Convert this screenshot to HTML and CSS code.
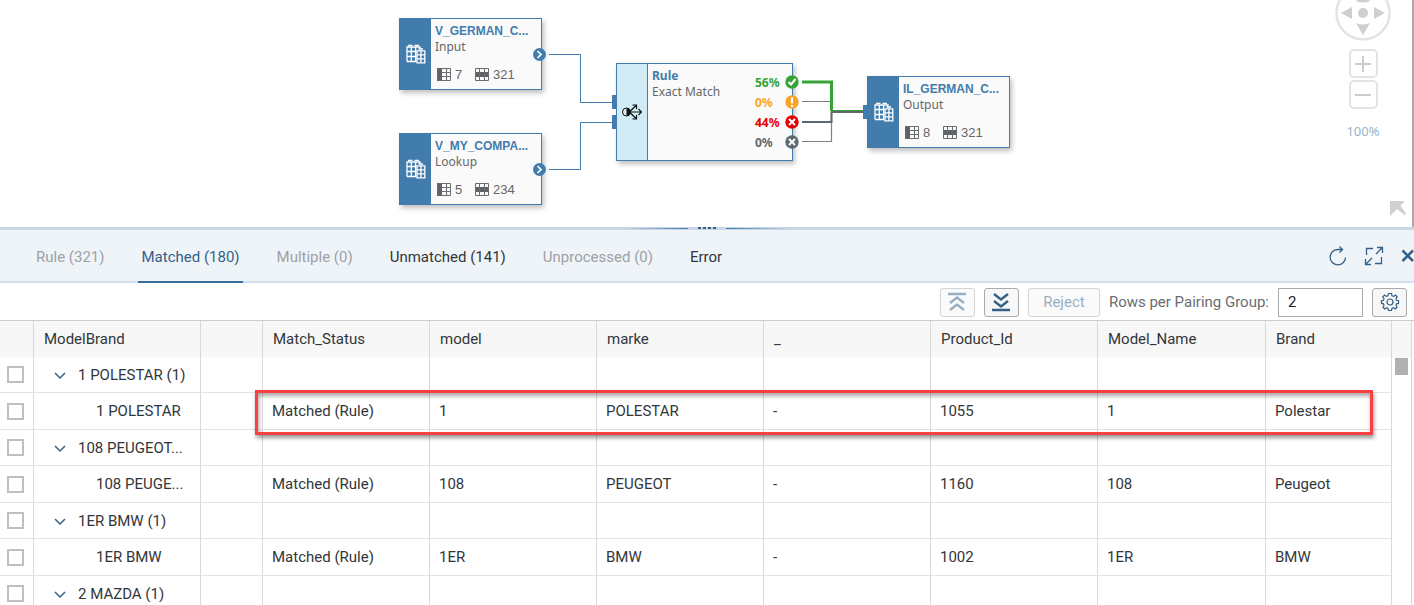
FILE: index.html
```html
<!DOCTYPE html>
<html lang="en">
<head>
<meta charset="utf-8">
<title>Match results</title>
<link rel="stylesheet" href="styles.css">
</head>
<body>
<svg class="defs" aria-hidden="true">
  <symbol id="building" viewBox="0 0 20 20">
    <g fill="none" stroke="#fff" stroke-width="1.300">
      <path d="M1 17.500V3H14V5M1 17.500H10.500M1 7.500H10.500M1 12.500H10.500M5.300 3V17.500M9.600 3V17.500"/>
      <path d="M2 1.300H6.500M8.500 1.300H13M12.500 5H17"/>
      <path fill="#427cac" d="M11 6.800H18.800V18.800H11Z"/>
      <path d="M14.900 6.800V18.800M11 10.800H18.800M11 14.800H18.800"/>
    </g>
  </symbol>
  <symbol id="cols" viewBox="0 0 14 14">
    <path fill="#5f6367" d="M0 0H5V13H0Z"/>
    <path fill="none" stroke="#6a6d70" d="M.5 .5H13.500V12.500H.5ZM9.500 0V13M5 4.500H14M5 8.500H14"/>
  </symbol>
  <symbol id="rows" viewBox="0 0 14 14">
    <path fill="#5f6367" d="M0 4H14V9H0Z"/>
    <path fill="none" stroke="#6a6d70" d="M.5 .5H13.500V12.500H.5ZM4.500 0V13M9.500 0V13"/>
  </symbol>
</svg>

<main class="app">
  <section class="canvas" aria-label="Flow">
    <div class="stage">
      <article class="node input">
        <div class="strip"><svg width="20" height="20"><use href="#building"/></svg></div>
        <div class="info">
          <h2 class="name">V_GERMAN_C...</h2>
          <p class="kind">Input</p>
          <p class="counts"><svg width="14" height="14"><use href="#cols"/></svg><span class="n">7</span><svg width="14" height="14"><use href="#rows"/></svg><span>321</span></p>
        </div>
      </article>
      <article class="node lookup">
        <div class="strip"><svg width="20" height="20"><use href="#building"/></svg></div>
        <div class="info">
          <h2 class="name">V_MY_COMPA...</h2>
          <p class="kind">Lookup</p>
          <p class="counts"><svg width="14" height="14"><use href="#cols"/></svg><span class="n">5</span><svg width="14" height="14"><use href="#rows"/></svg><span>234</span></p>
        </div>
      </article>
      <article class="node rule">
        <div class="strip pale"><svg width="20" height="18" viewBox="0 0 20 18">
          <circle cx="4.500" cy="9" r="4" fill="none" stroke="#111"/>
          <path d="M4.500 5A4 4 0 0 1 4.500 13Z" fill="#111"/>
          <path d="M8 9H19.500M16.500 6L19.500 9L16.500 12M8.500 8L14 2.500M10.500 2H14.500V6M8.500 10L14 15.500M10.500 16H14.500V12" fill="none" stroke="#111" stroke-width="1.200"/>
        </svg></div>
        <div class="info">
          <h2 class="name alt">Rule</h2>
          <p class="kind">Exact Match</p>
        </div>
        <ul class="rates">
          <li class="ok">56%</li>
          <li class="warn">0%</li>
          <li class="bad">44%</li>
          <li class="none">0%</li>
        </ul>
      </article>
      <article class="node output">
        <div class="strip"><svg width="20" height="20"><use href="#building"/></svg></div>
        <div class="info">
          <h2 class="name">IL_GERMAN_C...</h2>
          <p class="kind">Output</p>
          <p class="counts"><svg width="14" height="14"><use href="#cols"/></svg><span class="n">8</span><svg width="14" height="14"><use href="#rows"/></svg><span>321</span></p>
        </div>
      </article>
      <svg class="wires" width="616" height="227" viewBox="398 0 616 227" fill="none">
        <path d="M549 54.500H580.500V102.500H612M549 169.500H580.500V122.500H612" stroke="#427cac"/>
        <path d="M612 95H616V109H612ZM612 115H616V129H612ZM863 105H867V119H863Z" fill="#427cac"/>
        <path d="M802 101.500H831.500V141.500H802" stroke="#7b8388" stroke-width="1.200"/>
        <path d="M802 122H831.500V112" stroke="#5d686f" stroke-width="2"/>
        <path d="M802 82H831.500V111" stroke="#36a336" stroke-width="3"/>
        <path d="M831 110.500H863" stroke="#36a336"/>
        <path d="M831 112H863" stroke="#5d686f" stroke-width="2"/>
        <g fill="#427cac"><circle cx="539.500" cy="54.500" r="6.500"/><circle cx="539.500" cy="169.500" r="6.500"/></g>
        <path d="M537.500 51L541 54.500L537.500 58M537.500 166L541 169.500L537.500 173" stroke="#fff" stroke-width="1.700"/>
        <circle cx="792" cy="82" r="6.700" fill="#36a336"/>
        <circle cx="792" cy="102" r="6.700" fill="#f9a429"/>
        <circle cx="792" cy="122" r="6.700" fill="#e80000"/>
        <circle cx="792" cy="142" r="6.700" fill="#5d686f"/>
        <path d="M788.500 82L791 84.500L795.500 79M792 97.500V103.500M792 105V107M789 119L795 125M795 119L789 125M789 139L795 145M795 139L789 145" stroke="#fff" stroke-width="2"/>
      </svg>
    </div>
    <div class="nav">
      <svg class="wheel" width="56" height="41" viewBox="0 0 56 41">
        <circle cx="28" cy="13" r="26.500" fill="#fff" stroke="#e3e3e3" stroke-width="2.500"/>
        <circle cx="28" cy="13" r="5" fill="#cfcfcf"/>
        <path fill="#cfcfcf" d="M6 13L17 7V19ZM50 13L39 7V19ZM28 35L21 23Q28 26 35 23ZM28 -7L21 1Q28 4 35 1Z"/>
      </svg>
      <button class="zoom" aria-label="Zoom in"><svg width="18" height="18" stroke="#ccc" stroke-width="2"><path d="M1 9H17M9 1V17"/></svg></button>
      <button class="zoom" aria-label="Zoom out"><svg width="18" height="18" stroke="#ccc" stroke-width="2"><path d="M1 9H17"/></svg></button>
      <span class="percent">100%</span>
    </div>
    <svg class="corner" width="16" height="16" fill="#d0d0d0"><path d="M0 0H15L10.500 4.500L15.500 12V14.500L7 8L0 15Z"/></svg>
  </section>

  <div class="splitter" role="separator"><span class="fade left"></span><span class="dots"><i></i><i></i><i></i><i></i></span><span class="fade right"></span></div>

  <header class="tabbar">
    <div class="tabs" role="tablist">
      <button class="tab" role="tab" disabled>Rule (321)</button>
      <button class="tab active" role="tab" aria-selected="true">Matched (180)</button>
      <button class="tab" role="tab" disabled>Multiple (0)</button>
      <button class="tab" role="tab">Unmatched (141)</button>
      <button class="tab" role="tab" disabled>Unprocessed (0)</button>
      <button class="tab" role="tab">Error</button>
    </div>
    <div class="actions">
      <button class="plain" aria-label="Refresh"><svg width="18" height="20" viewBox="0 0 18 20"><path d="M16.500 11.500A7.700 7.700 0 1 1 8.700 3.500H13M10.500 .5L13.500 3.500L10.500 6.500"/></svg></button>
      <button class="plain" aria-label="Full screen"><svg width="20" height="20" viewBox="0 0 20 20"><path d="M2.500 9V2.500H9M17.500 11V17.500H11M12 8L18.500 1.500M13 1.500H18.500V7M8 12L1.500 18.500M1.500 13V18.500H7"/></svg></button>
      <button class="plain close" aria-label="Close"><svg width="13" height="14" viewBox="0 0 13 14"><path stroke-width="2.500" d="M1.500 1.500L12 12M12 1.500L1.500 12"/></svg></button>
    </div>
  </header>

  <div class="toolbar">
    <button class="btn square" aria-label="Collapse all" disabled><svg width="20" height="20" viewBox="0 0 20 20"><path d="M1 2H19M3 11L10 5.500L17 11M3 18L10 12.500L17 18"/></svg></button>
    <button class="btn square" aria-label="Expand all"><svg width="20" height="20" viewBox="0 0 20 20"><path d="M1 18H19M3 2L10 7.500L17 2M3 9L10 14.500L17 9"/></svg></button>
    <button class="btn reject" disabled>Reject</button>
    <label class="rows-label" for="rows-per-group">Rows per Pairing Group:</label>
    <input class="rows-input" id="rows-per-group" type="text" value="2">
    <button class="btn square gear" aria-label="Settings"><svg width="20" height="20" viewBox="0 0 20 20"><circle cx="10" cy="10" r="3"/><path d="M8.500 1.500H11.500L12 3.700L13.800 4.400L15.600 3L17.200 4.900L16 6.600L16.500 8.300L18.500 8.600V11.400L16.500 11.800L16 13.500L17 15.300L15.200 17L13.500 15.800L12 16.500L11.500 18.500H8.500L8 16.500L6.500 15.800L4.800 17L3 15.300L4 13.500L3.500 11.800L1.500 11.400V8.600L3.500 8.300L4 6.600L2.800 4.900L4.600 3L6.300 4.400L8 3.700Z"/></svg></button>
  </div>

  <section class="grid">
    <table class="data">
      <colgroup><col class="c-check"><col class="c-data"><col class="c-gap"><col class="c-data"><col class="c-data"><col class="c-data"><col class="c-data"><col class="c-data"><col class="c-wide"><col></colgroup>
      <thead>
        <tr><th></th><th>ModelBrand</th><th></th><th>Match_Status</th><th>model</th><th>marke</th><th>_</th><th>Product_Id</th><th>Model_Name</th><th>Brand</th></tr>
      </thead>
      <tbody>
        <tr class="group"><td class="pick"><input type="checkbox" aria-label="1 POLESTAR (1)"></td><td class="tree"><button class="toggle" aria-label="Collapse"><svg width="12" height="8"><path d="M1 1L6 6L11 1"/></svg></button>1 POLESTAR (1)</td><td></td><td></td><td></td><td></td><td></td><td></td><td></td><td></td></tr>
        <tr class="child"><td class="pick"><input type="checkbox" aria-label="1 POLESTAR"></td><td class="leaf">1 POLESTAR</td><td></td><td>Matched (Rule)</td><td>1</td><td>POLESTAR</td><td>-</td><td>1055</td><td>1</td><td>Polestar</td></tr>
        <tr class="group"><td class="pick"><input type="checkbox" aria-label="108 PEUGEOT"></td><td class="tree"><button class="toggle" aria-label="Collapse"><svg width="12" height="8"><path d="M1 1L6 6L11 1"/></svg></button>108 PEUGEOT...</td><td></td><td></td><td></td><td></td><td></td><td></td><td></td><td></td></tr>
        <tr class="child"><td class="pick"><input type="checkbox" aria-label="108 PEUGEOT row"></td><td class="leaf">108 PEUGE...</td><td></td><td>Matched (Rule)</td><td>108</td><td>PEUGEOT</td><td>-</td><td>1160</td><td>108</td><td>Peugeot</td></tr>
        <tr class="group"><td class="pick"><input type="checkbox" aria-label="1ER BMW (1)"></td><td class="tree"><button class="toggle" aria-label="Collapse"><svg width="12" height="8"><path d="M1 1L6 6L11 1"/></svg></button>1ER BMW (1)</td><td></td><td></td><td></td><td></td><td></td><td></td><td></td><td></td></tr>
        <tr class="child"><td class="pick"><input type="checkbox" aria-label="1ER BMW"></td><td class="leaf">1ER BMW</td><td></td><td>Matched (Rule)</td><td>1ER</td><td>BMW</td><td>-</td><td>1002</td><td>1ER</td><td>BMW</td></tr>
        <tr class="group"><td class="pick"><input type="checkbox" aria-label="2 MAZDA (1)"></td><td class="tree"><button class="toggle" aria-label="Collapse"><svg width="12" height="8"><path d="M1 1L6 6L11 1"/></svg></button>2 MAZDA (1)</td><td></td><td></td><td></td><td></td><td></td><td></td><td></td><td></td></tr>
      </tbody>
    </table>
    <div class="scroll"><div class="scroll-head"></div><div class="thumb"></div></div>
    <div class="highlight"></div>
  </section>
</main>
</body>
</html>
```

FILE: styles.css
```css
* { box-sizing: border-box; }
body { margin: 0; background: #fff; color: #32363a; font: 15px/20px Roboto, "Noto Sans", sans-serif; }
button, input { font: inherit; color: inherit; margin: 0; }
button { padding: 0; border: 0; background: none; }
h2, p, ul { margin: 0; padding: 0; list-style: none; }
svg { display: block; flex: none; }
.defs { position: absolute; width: 0; height: 0; }
.app { display: flex; flex-direction: column; height: 100vh; overflow: hidden; }

.canvas { position: relative; flex: none; height: 227px; border-right: 2px solid #ababab; overflow: hidden; font-family: "Noto Sans", sans-serif; }
.stage { position: relative; width: 616px; height: 227px; margin: 0 auto; }
.wires { position: absolute; left: 0; top: 0; }
.node { position: absolute; display: flex; width: 143px; height: 72px; border: 1px solid #427cac; background: #fafafa; box-shadow: 2px 3px 5px rgba(0, 0, 0, .25); }
.input { left: 1px; top: 18px; }
.lookup { left: 1px; top: 133px; }
.rule { left: 218px; top: 63px; width: 177px; height: 98px; }
.output { left: 469px; top: 76px; }
.strip { display: flex; flex: none; width: 31px; align-items: center; justify-content: center; background: #427cac; }
.pale { background: #d1ebf7; border-right: 1px solid #427cac; }
.info { flex: 1; padding: 4px; color: #666; font-size: 12px; line-height: 16px; }
.name { color: #427cac; font: bold 12px/16px "Liberation Sans", Arial, sans-serif; }
.alt { font-family: "Noto Sans", sans-serif; }
.counts { display: flex; align-items: center; margin-top: 12px; padding-left: 2px; font: 13px/16px "Liberation Sans", Arial, sans-serif; gap: 4px; }
.n { width: 16px; }
.rates { width: 37px; padding: 9px 0; font-size: 12px; line-height: 20px; font-weight: bold; }
.ok { color: #36a336; }
.warn { color: #f9a429; }
.bad { color: #e80000; }
.none { color: #5d686f; }

.nav { position: absolute; top: 0; right: 21px; display: flex; flex-direction: column; align-items: center; }
.zoom { display: grid; place-items: center; width: 29px; height: 29px; margin-bottom: 2px; border: 2px solid #e3e3e3; border-radius: 5px; background: #fff; }
.wheel { margin-bottom: 8px; }
.percent { margin-top: 10px; color: #94b2cc; font-size: 13px; }
.corner { position: absolute; right: 6px; bottom: 10px; }

.splitter { display: flex; flex: none; justify-content: center; gap: 10px; height: 3px; background: #c8d6e6; }
.fade { width: 64px; height: 1px; margin-top: 1px; }
.left { background: linear-gradient(to right, transparent, #427cac); }
.right { background: linear-gradient(to left, transparent, #427cac); }
.dots { display: flex; gap: 2px; }
.dots i { width: 3px; height: 2px; background: #346187; }

.tabbar { display: flex; flex: none; justify-content: space-between; height: 53px; padding-left: 33px; background: #eff4f9; border-bottom: 2px solid #d1e0ee; }
.tabs { display: flex; gap: 31px; }
.tab { height: 53px; padding: 2px 3px 0; border-bottom: 2px solid transparent; white-space: nowrap; }
.tab:disabled { color: #9da1a5; }
.tab.active { color: #346187; border-color: #346fa0; }
.actions { display: flex; align-items: center; gap: 17px; }
.plain { display: block; }
.plain svg, .btn svg { fill: none; stroke: #346187; stroke-width: 1.300; }

.toolbar { display: flex; flex: none; align-items: center; justify-content: flex-end; gap: 9px; height: 37px; padding: 1px 7px 0 0; }
.btn { display: grid; place-items: center; height: 29px; border: 1px solid #a9abad; border-radius: 3px; background: #f7f7f7; color: #346187; }
.btn:disabled { opacity: .5; }
.square { width: 35px; }
.square svg { stroke-width: 2.400; }
.gear svg { stroke-width: 1.200; }
.reject { width: 72px; }
.rows-label { color: #6a6d70; white-space: nowrap; }
.rows-input { width: 85px; height: 29px; padding: 0 9px; border: 1px solid #a9abad; background: #fff; color: #222; }

.grid { position: relative; display: flex; flex: 1; min-height: 0; align-items: flex-start; border-top: 1px solid #ccc; }
.data { flex: 1; min-width: 0; table-layout: fixed; border-collapse: separate; border-spacing: 0; }
.c-check { width: 34px; }
.c-data { width: 167px; }
.c-gap { width: 62px; }
.c-wide { width: 168px; }
th { height: 36px; padding: 0 10px; background: #f7f7f7; border-right: 1px solid #d9d9d9; font-weight: normal; text-align: left; }
td { padding: 0 9px; border-right: 1px solid #d9d9d9; border-bottom: 1px solid #e2e2e2; white-space: nowrap; }
.group td { height: 36px; }
.child td { height: 37px; }
.pick { padding: 0 7px; }
.pick input { display: block; appearance: none; width: 17px; height: 17px; border: 2px solid #bfbfbf; background: #fff; }
.tree { padding-left: 20px; }
.toggle { display: inline-block; margin-right: 12px; vertical-align: middle; }
.toggle svg { fill: none; stroke: #346187; stroke-width: 1.500; }
td.leaf { padding-left: 62px; }
.scroll { display: flex; flex: none; flex-direction: column; align-items: center; align-self: stretch; width: 20px; margin-right: 2px; border-right: 1px solid #d9d9d9; }
.scroll-head { align-self: stretch; height: 37px; background: #f7f7f7; }
.thumb { width: 13px; height: 17px; background: #b1b1b1; }
.highlight { position: absolute; left: 255px; right: 41px; top: 69px; height: 45px; border: 3px solid #f94144; box-shadow: 1px 3px 4px rgba(0, 0, 0, .4), inset 1px 3px 4px rgba(0, 0, 0, .35); pointer-events: none; }
```
